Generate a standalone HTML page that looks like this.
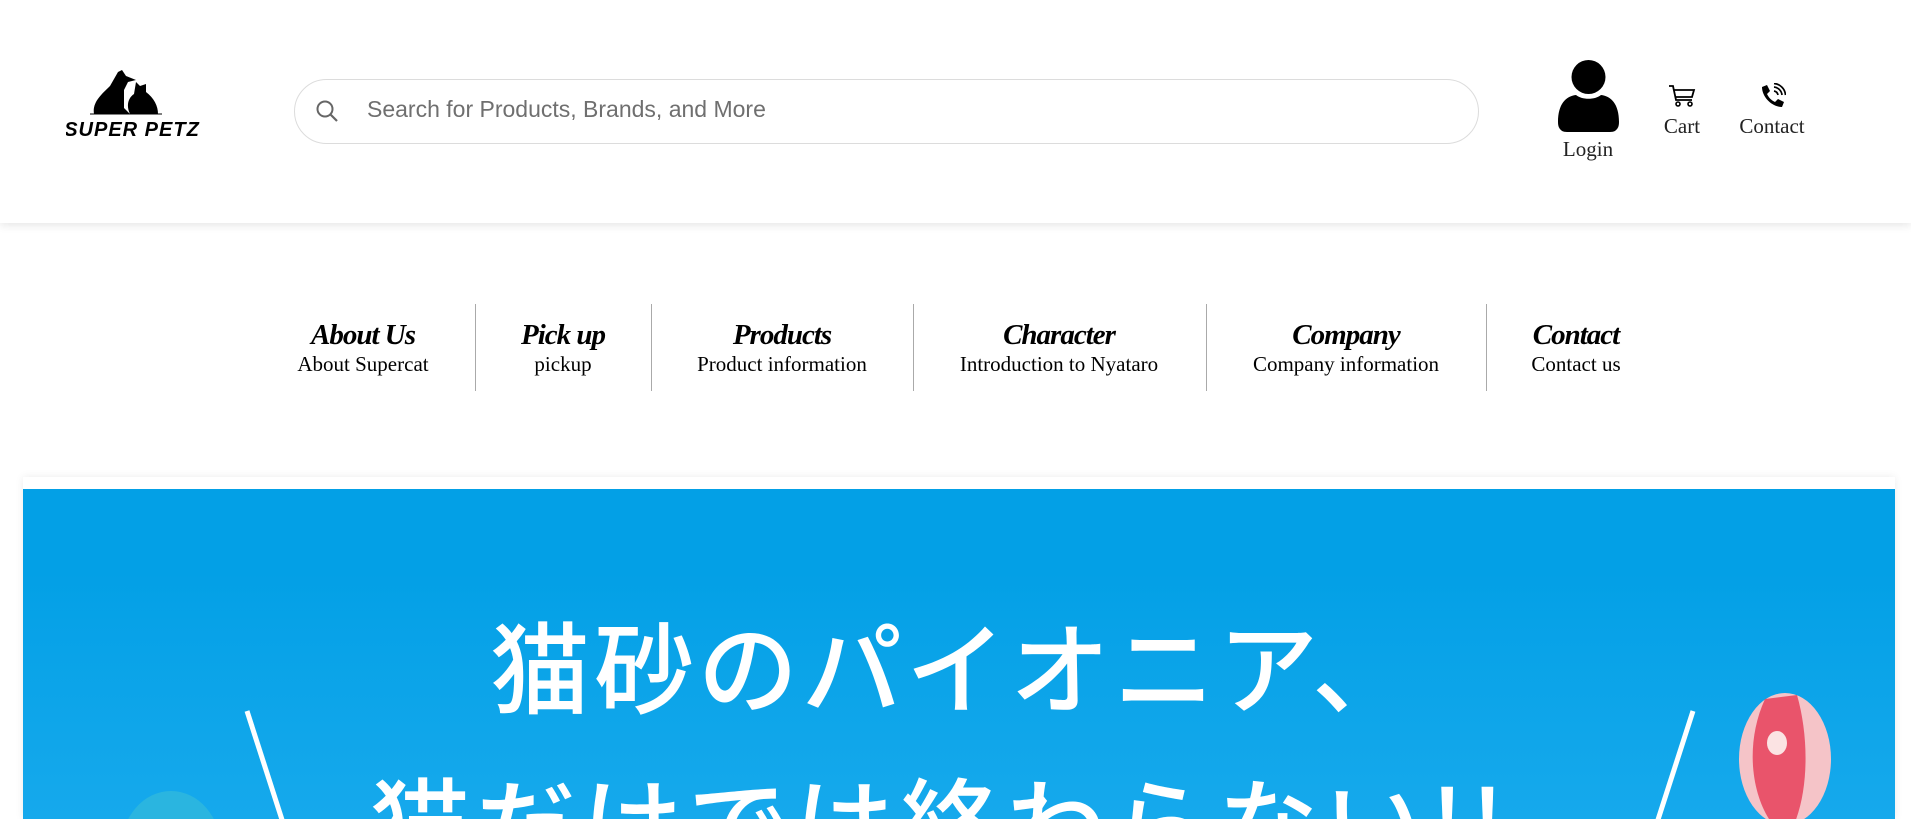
<!DOCTYPE html>
<html><head><meta charset="utf-8"><style>
*{margin:0;padding:0;box-sizing:border-box}
html{overflow:hidden;width:1911px;height:819px}
body{width:1911px;height:819px;overflow:hidden;background:#fff;position:relative;font-family:"Liberation Serif",serif}
.hdr{position:absolute;left:0;top:0;width:1911px;height:223px;background:#fff;box-shadow:0 3px 8px rgba(0,0,0,.09);z-index:2}
.abs{position:absolute}
.search{left:294px;top:79px;width:1185px;height:65px;border:1px solid #dcdcdc;border-radius:33px}
.search span{position:absolute;left:72px;top:16px;font:23px "Liberation Sans",sans-serif;color:#6f6f6f}
.lbl{font-size:21px;color:#222;text-align:center}
.nav{position:absolute;top:318px;text-align:center;transform:translateX(-50%);white-space:nowrap}
.nav b{display:block;font:italic bold 29px "Liberation Serif",serif;letter-spacing:-1px;line-height:34px}
.nav i{display:block;font-style:normal;font-size:21px;line-height:24px}
.div{position:absolute;top:304px;width:1px;height:87px;background:#aaa}
.card{left:23px;top:477px;width:1872px;height:342px;background:#fff;box-shadow:0 0 8px rgba(0,0,0,.08)}
.banner{left:23px;top:489px;width:1872px;height:330px;background:linear-gradient(#03a0e6,#03a0e6 25%,#16a9ec);overflow:hidden}
.jp{font-family:"Noto Sans CJK JP",sans-serif;font-weight:500;color:#fff;white-space:nowrap}
</style></head><body>
<div class="hdr">
 <svg class="abs" style="left:66px;top:66px" width="136" height="76" viewBox="0 0 136 76">
  <path d="M28 48 C26 36 36 28 44 20 L52 6 L56 4 L60 10 L70 14 L62 16 L58 24 L58 42 L64 48 Z" fill="#000"/>
  <path d="M64 48 C60 40 62 32 68 28 L70 16 L74 20 L80 18 L80 26 C88 32 92 40 92 48 Z" fill="#000"/>
  <path d="M24 48 L96 48" stroke="#000" stroke-width="1"/>
  <text x="66" y="70" text-anchor="middle" font-family="Liberation Sans,sans-serif" font-style="italic" font-weight="bold" font-size="20" letter-spacing="1">SUPER PETZ</text>
 </svg>
 <div class="abs search">
  <svg class="abs" style="left:20px;top:19px" width="26" height="26" viewBox="0 0 26 26"><circle cx="10" cy="10" r="7.5" fill="none" stroke="#666" stroke-width="2"/><path d="M15.5 15.5 L22 22" stroke="#666" stroke-width="2.2"/></svg>
  <span>Search for Products, Brands, and More</span>
 </div>
 <svg class="abs" style="left:1558px;top:60px" width="61" height="73" viewBox="0 0 61 73"><circle cx="30.5" cy="17" r="17" fill="#000"/><path d="M0 62 C0 44 8 36 18 35 C24 40 37 40 43 35 C53 36 61 44 61 62 Q61 72 52 72 L9 72 Q0 72 0 62Z" fill="#000"/></svg>
 <div class="abs lbl" style="left:1548px;top:137px;width:80px">Login</div>
 <svg class="abs" style="left:1668px;top:84px" width="28" height="24" viewBox="0 0 28 24"><path d="M1 2 L5 2 L8 16 L24 16 M6 6 L26 6 L24 13 L8 13" fill="none" stroke="#000" stroke-width="1.8"/><circle cx="10" cy="20" r="2" fill="none" stroke="#000" stroke-width="1.6"/><circle cx="22" cy="20" r="2" fill="none" stroke="#000" stroke-width="1.6"/></svg>
 <div class="abs lbl" style="left:1642px;top:114px;width:80px">Cart</div>
 <svg class="abs" style="left:1759px;top:83px" width="27" height="27" viewBox="0 0 27 27"><path d="M3 4 L8 2 L11 8 L8 11 C10 15 12 17 16 19 L19 16 L25 19 L23 24 C13 24 3 14 3 4Z" fill="#000"/><path d="M15 8 A5 5 0 0 1 19 12 M15 4 A9 9 0 0 1 23 12 M15 0.5 A12.5 12.5 0 0 1 26.5 12" fill="none" stroke="#000" stroke-width="1.7"/></svg>
 <div class="abs lbl" style="left:1722px;top:114px;width:100px">Contact</div>
</div>

<div class="nav" style="left:363px"><b>About Us</b><i>About Supercat</i></div>
<div class="div" style="left:475px"></div>
<div class="nav" style="left:563px"><b>Pick up</b><i>pickup</i></div>
<div class="div" style="left:651px"></div>
<div class="nav" style="left:782px"><b>Products</b><i>Product information</i></div>
<div class="div" style="left:913px"></div>
<div class="nav" style="left:1059px"><b>Character</b><i>Introduction to Nyataro</i></div>
<div class="div" style="left:1206px"></div>
<div class="nav" style="left:1346px"><b>Company</b><i>Company information</i></div>
<div class="div" style="left:1486px"></div>
<div class="nav" style="left:1576px"><b>Contact</b><i>Contact us</i></div>

<div class="abs card"></div>
<div class="abs banner">
 <div class="abs jp" style="left:467px;top:114px;font-size:100px;letter-spacing:4px;line-height:120px">猫砂のパイオニア、</div>
 <div class="abs jp" style="left:347px;top:270px;font-size:100px;letter-spacing:6px;line-height:120px">猫だけでは終わらない!!</div>
 <svg class="abs" style="left:0;top:0" width="1872" height="340"><path d="M224 222 L262 340" stroke="#fff" stroke-width="5"/><path d="M1670 222 L1632 340" stroke="#fff" stroke-width="5"/><ellipse cx="148" cy="360" rx="50" ry="58" fill="#2ab5e0"/></svg>
 <svg class="abs" style="left:1700px;top:198px" width="130" height="150" viewBox="0 0 130 150"><ellipse cx="62" cy="72" rx="46" ry="66" fill="#f5c4c8"/><path d="M42 12 C20 60 30 115 52 140 L70 140 C86 104 86 50 74 8Z" fill="#e9546b"/><ellipse cx="54" cy="56" rx="10" ry="12" fill="#fbe3e3"/></svg>
</div>
</body></html>
